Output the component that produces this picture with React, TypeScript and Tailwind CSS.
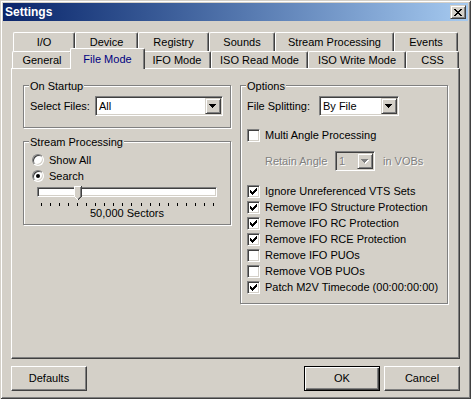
import type { ReactNode } from 'react';

// classic 3D borders
const SUNKEN =
  'border border-t-[#808080] border-l-[#808080] border-r-white border-b-white shadow-[inset_1px_1px_#404040,inset_-1px_-1px_#d4d0c8]';
const RAISED =
  'border border-t-[#d4d0c8] border-l-[#d4d0c8] border-r-[#404040] border-b-[#404040] shadow-[inset_1px_1px_#fff,inset_-1px_-1px_#808080]';
const DISABLED_TEXT = 'text-[#808080] [text-shadow:1px_1px_0_#fff]';

const TOP_TABS = [
  { label: 'I/O', w: 'w-[62px]' },
  { label: 'Device', w: 'w-[63px]' },
  { label: 'Registry', w: 'w-[71px]' },
  { label: 'Sounds', w: 'w-[66px]' },
  { label: 'Stream Processing', w: 'w-[119px]' },
  { label: 'Events', w: 'w-[64px]' },
];

const BOTTOM_TABS = [
  { label: 'General', w: 'w-[60px]' },
  { label: 'File Mode', w: 'w-[75px]', active: true },
  { label: 'IFO Mode', w: 'w-[68px]' },
  { label: 'ISO Read Mode', w: 'w-[97px]' },
  { label: 'ISO Write Mode', w: 'w-[98px]' },
  { label: 'CSS', w: 'w-[53px]' },
];

const OPTIONS = [
  { label: 'Ignore Unreferenced VTS Sets', checked: true },
  { label: 'Remove IFO Structure Protection', checked: true },
  { label: 'Remove IFO RC Protection', checked: true },
  { label: 'Remove IFO RCE Protection', checked: true },
  { label: 'Remove IFO PUOs', checked: false },
  { label: 'Remove VOB PUOs', checked: false },
  { label: 'Patch M2V Timecode (00:00:00:00)', checked: true },
];

function Arrow({ disabled }: { disabled?: boolean }) {
  return (
    <svg width="8" height="5" viewBox="0 0 8 5" shapeRendering="crispEdges">
      {disabled && <path d="M1 1h7v1H1zM2 2h5v1H2zM3 3h3v1H3zM4 4h1v1H4z" fill="#fff" />}
      <path d="M0 0h7v1H0zM1 1h5v1H1zM2 2h3v1H2zM3 3h1v1H3z" fill={disabled ? '#808080' : '#000'} />
    </svg>
  );
}

function Combo({ value, className, disabled }: { value: string; className: string; disabled?: boolean }) {
  return (
    <div className={`flex h-[20px] p-[1px] ${SUNKEN} ${className} ${disabled ? 'bg-[#d4d0c8]' : 'bg-white'}`}>
      <span className={`flex-1 pl-[2px] flex items-center ${disabled ? DISABLED_TEXT : ''}`}>{value}</span>
      <div className={`w-[16px] flex items-center justify-center bg-[#d4d0c8] ${RAISED}`}>
        <Arrow disabled={disabled} />
      </div>
    </div>
  );
}

function Check({ label, checked }: { label: string; checked: boolean }) {
  return (
    <div className="flex h-[16px] items-center gap-[5px]">
      <div className={`w-[13px] h-[13px] bg-white flex items-center justify-center ${SUNKEN}`}>
        {checked && (
          <svg width="7" height="7" viewBox="0 0 7 7" shapeRendering="crispEdges">
            <path d="M0 2h1v3H0zM1 3h1v3H1zM2 4h1v3H2zM3 3h1v3H3zM4 2h1v3H4zM5 1h1v3H5zM6 0h1v3H6z" fill="#000" />
          </svg>
        )}
      </div>
      <span>{label}</span>
    </div>
  );
}

function Radio({ label, checked }: { label: string; checked: boolean }) {
  return (
    <div className="flex h-[16px] items-center gap-[5px]">
      <div className="w-[12px] h-[12px] rounded-full bg-white border border-t-[#808080] border-l-[#808080] border-r-white border-b-white shadow-[inset_1px_1px_#404040,inset_-1px_-1px_#d4d0c8] flex items-center justify-center">
        {checked && <div className="w-[4px] h-[4px] rounded-full bg-black" />}
      </div>
      <span>{label}</span>
    </div>
  );
}

function Group({ title, className, children }: { title: string; className: string; children: ReactNode }) {
  return (
    <div className={`relative border border-[#808080] shadow-[inset_1px_1px_#fff,1px_1px_#fff] ${className}`}>
      <span className="absolute -top-[6px] left-[5px] px-[1px] bg-[#d4d0c8] leading-[13px]">{title}</span>
      {children}
    </div>
  );
}

function Button({ label, isDefault }: { label: string; isDefault?: boolean }) {
  return (
    <button
      className={`w-[76px] h-[25px] flex items-center justify-center bg-[#d4d0c8] ${
        isDefault
          ? 'border border-black shadow-[inset_1px_1px_#fff,inset_-1px_-1px_#404040,inset_-2px_-2px_#808080]'
          : 'border border-t-white border-l-white border-r-[#404040] border-b-[#404040] shadow-[inset_-1px_-1px_#808080]'
      }`}
    >
      {label}
    </button>
  );
}

export default function App() {
  return (
    <div className="w-[471px] h-[399px] bg-[#d4d0c8] p-[3px] flex flex-col font-['Liberation_Sans',Arial,sans-serif] text-[11px] leading-[13px] text-black shadow-[inset_1px_1px_#d4d0c8,inset_-1px_-1px_#404040,inset_2px_2px_#fff,inset_-2px_-2px_#808080]">
      {/* Title bar */}
      <div className="h-[18px] flex items-center justify-between pl-[2px] pr-[2px] bg-linear-to-r from-[#0a246a] to-[#a6caf0]">
        <span className="text-white font-bold text-[12px]">Settings</span>
        <div className={`w-[16px] h-[14px] flex items-center justify-center bg-[#d4d0c8] ${RAISED}`}>
          <svg width="8" height="7" viewBox="0 0 8 7" shapeRendering="crispEdges">
            <path d="M0 0h2v1H0zM6 0h2v1H6zM1 1h2v1H1zM5 1h2v1H5zM2 2h4v1H2zM3 3h2v1H3zM2 4h4v1H2zM1 5h2v1H1zM5 5h2v1H5zM0 6h2v1H0zM6 6h2v1H6z" fill="#000" />
          </svg>
        </div>
      </div>

      <div className="flex-1 flex flex-col px-[8px] pt-[11px]">
        {/* Tabs */}
        <div className="flex h-[19px] ml-[2px]">
          {TOP_TABS.map((t) => (
            <div
              key={t.label}
              className={`${t.w} h-[19px] flex items-center justify-center rounded-t-[2px] border-l border-t border-r border-white border-r-[#404040] shadow-[inset_-1px_0_#808080]`}
            >
              {t.label}
            </div>
          ))}
        </div>
        <div className="flex h-[17px] ml-[1px] items-end">
          {BOTTOM_TABS.map((t) =>
            t.active ? (
              <div
                key={t.label}
                className={`${t.w} relative z-10 -mx-[2px] -mb-px h-[21px] flex items-center justify-center bg-[#d4d0c8] rounded-t-[2px] border-l border-t border-r border-white border-r-[#404040] shadow-[inset_-1px_0_#808080] text-[#000080]`}
              >
                {t.label}
              </div>
            ) : (
              <div
                key={t.label}
                className={`${t.w} h-[17px] flex items-center justify-center bg-[#d4d0c8] rounded-t-[2px] border-l border-t border-r border-white border-r-[#404040] shadow-[inset_-1px_0_#808080]`}
              >
                {t.label}
              </div>
            )
          )}
        </div>

        {/* Panel */}
        <div className="h-[291px] flex gap-[9px] pl-[11px] pt-[16px] border border-t-white border-l-white border-r-[#404040] border-b-[#404040] shadow-[inset_-1px_-1px_#808080]">
          <div className="w-[208px] flex flex-col">
            <Group title="On Startup" className="h-[43px] pt-[10px] pl-[6px]">
              <div className="flex items-center">
                <span className="w-[65px]">Select Files:</span>
                <Combo value="All" className="w-[128px]" />
              </div>
            </Group>

            <Group title="Stream Processing" className="mt-[13px] h-[84px] pt-[10px] pl-[8px]">
              <Radio label="Show All" checked={false} />
              <Radio label="Search" checked />
              <div className="relative ml-[5px] mt-[3px] w-[180px] h-[10px] bg-white border border-t-[#808080] border-l-[#808080] border-r-white border-b-white shadow-[inset_1px_1px_#404040,inset_-1px_-1px_#d4d0c8]">
                <svg className="absolute left-[36px] -top-[2px]" width="8" height="15" viewBox="0 0 8 15" shapeRendering="crispEdges">
                  <path d="M0 0h8v11l-4 4l-4-4z" fill="#d4d0c8" />
                  <path d="M0 0h7v1H1v10H0z" fill="#fff" />
                  <path d="M7 0h1v11H7zM6 11h1v1H6zM5 12h1v1H5zM4 13h1v1H4z" fill="#404040" />
                  <path d="M6 1h1v10H6zM5 11h1v1H5zM4 12h1v1H4z" fill="#808080" />
                  <path d="M1 11h1v1H1zM2 12h1v1H2zM3 13h1v1H3z" fill="#fff" />
                </svg>
              </div>
              <div className="ml-[9px] mt-[6px] w-[173px] h-[3px] flex justify-between">
                {Array.from({ length: 20 }).map((_, i) => (
                  <div key={i} className="w-px h-[3px] bg-black" />
                ))}
              </div>
              <div className="mt-[1px] -ml-[8px] text-center">50,000 Sectors</div>
            </Group>
          </div>

          <Group title="Options" className="w-[208px] h-[219px] pt-[10px] pl-[6px]">
            <div className="flex items-center">
              <span className="w-[72px]">File Splitting:</span>
              <Combo value="By File" className="w-[80px]" />
            </div>
            <div className="mt-[11px]">
              <Check label="Multi Angle Processing" checked={false} />
            </div>
            <div className="mt-[8px] ml-[18px] flex items-center">
              <span className={`w-[70px] ${DISABLED_TEXT}`}>Retain Angle</span>
              <Combo value="1" className="w-[40px]" disabled />
              <span className={`ml-[8px] ${DISABLED_TEXT}`}>in VOBs</span>
            </div>
            <div className="mt-[12px] flex flex-col">
              {OPTIONS.map((o) => (
                <Check key={o.label} label={o.label} checked={o.checked} />
              ))}
            </div>
          </Group>
        </div>

        {/* Buttons */}
        <div className="mt-[7px] flex justify-between">
          <Button label="Defaults" />
          <div className="flex gap-[4px]">
            <Button label="OK" isDefault />
            <Button label="Cancel" />
          </div>
        </div>
      </div>
    </div>
  );
}
